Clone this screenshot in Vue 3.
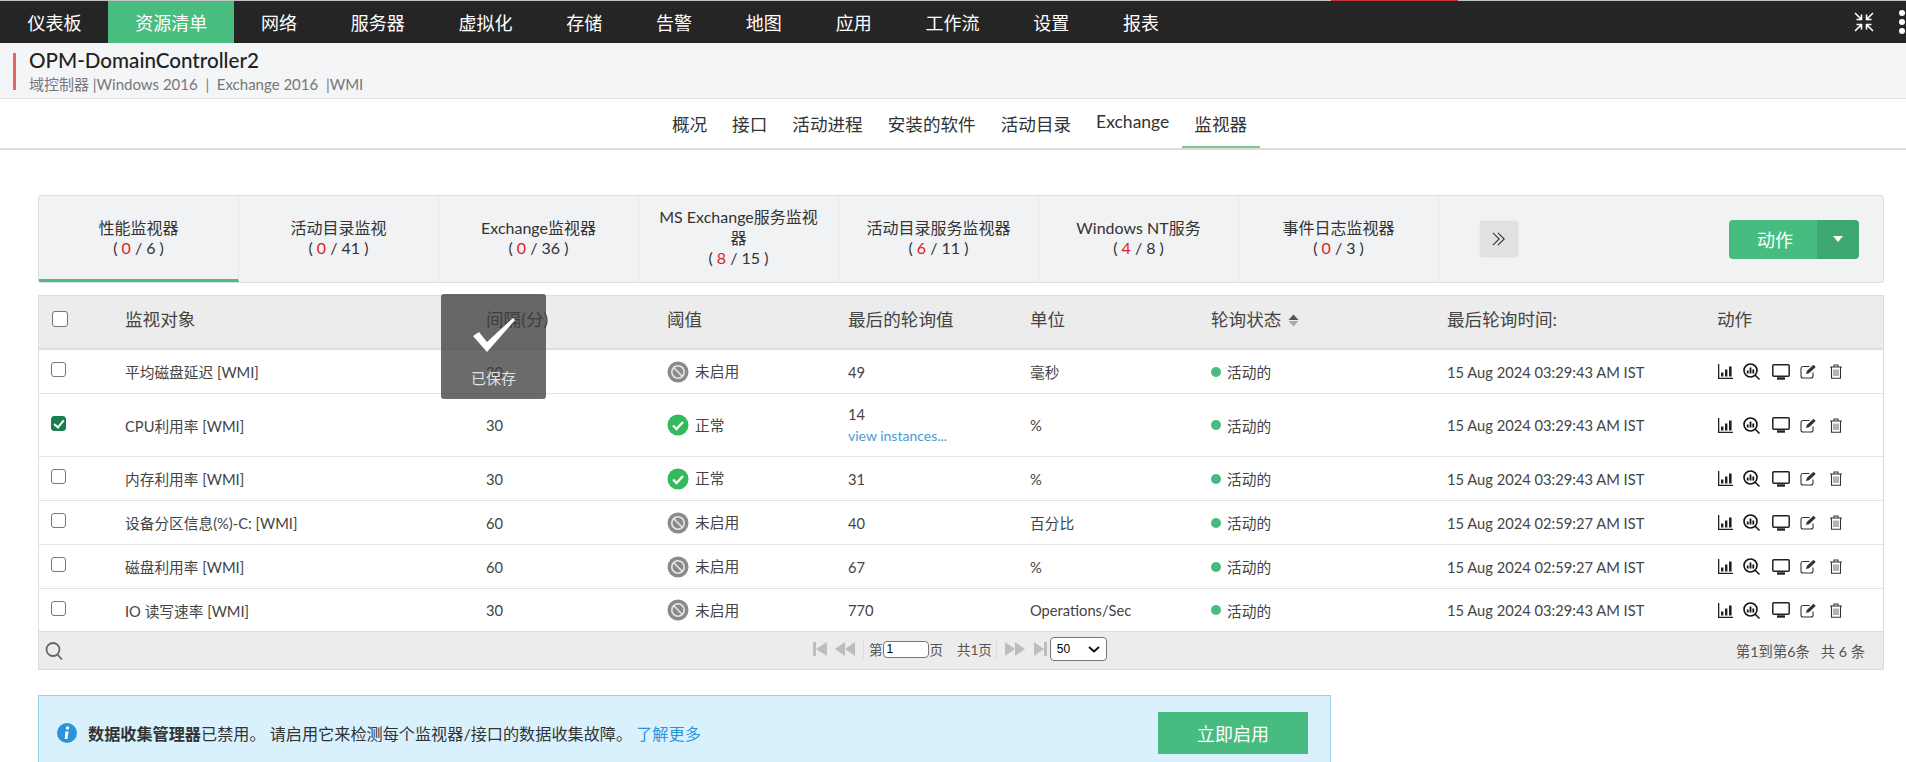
<script setup>
const nav = ['仪表板','资源清单','网络','服务器','虚拟化','存储','告警','地图','应用','工作流','设置','报表']
const subs = ['概况','接口','活动进程','安装的软件','活动目录','Exchange','监视器']
const tabs = [
  { name: '性能监视器', bad: 0, total: 6 },
  { name: '活动目录监视', bad: 0, total: 41 },
  { name: 'Exchange监视器', bad: 0, total: 36 },
  { name: 'MS Exchange服务监视器', bad: 8, total: 15 },
  { name: '活动目录服务监视器', bad: 6, total: 11 },
  { name: 'Windows NT服务', bad: 4, total: 8 },
  { name: '事件日志监视器', bad: 0, total: 3 }
]
const heads = ['监视对象','间隔(分)','阈值','最后的轮询值','单位','轮询状态','最后轮询时间:','动作']
const rows = [
  { name: '平均磁盘延迟 [WMI]', gap: 30, ok: false, val: 49, unit: '毫秒', time: '15 Aug 2024 03:29:43 AM IST' },
  { name: 'CPU利用率 [WMI]', gap: 30, ok: true, val: 14, unit: '%', time: '15 Aug 2024 03:29:43 AM IST', checked: true, more: true },
  { name: '内存利用率 [WMI]', gap: 30, ok: true, val: 31, unit: '%', time: '15 Aug 2024 03:29:43 AM IST' },
  { name: '设备分区信息(%)-C: [WMI]', gap: 60, ok: false, val: 40, unit: '百分比', time: '15 Aug 2024 02:59:27 AM IST' },
  { name: '磁盘利用率 [WMI]', gap: 60, ok: false, val: 67, unit: '%', time: '15 Aug 2024 02:59:27 AM IST' },
  { name: 'IO 读写速率 [WMI]', gap: 30, ok: false, val: 770, unit: 'Operations/Sec', time: '15 Aug 2024 03:29:43 AM IST', last: true }
]
</script>

<template>
  <div class="page">
    <div class="redline"></div>
    <header class="topbar">
      <a v-for="(n, i) in nav" :key="n" class="nav-item" :class="{ on: i === 1 }">{{ n }}</a>
      <div class="top-right">
        <svg class="shrink" width="20" height="20" viewBox="0 0 20 20" fill="none" stroke="#fff" stroke-width="1.6">
          <path d="M1 1l6 6M2.500 7.500h5v-5M19 1l-6 6M17.500 7.500h-5v-5M1 19l6-6M2.500 12.500h5v5M19 19l-6-6M17.500 12.500h-5v5"/>
        </svg>
        <div class="dots"><i></i><i></i><i></i></div>
      </div>
    </header>

    <section class="crumb">
      <div class="crumb-bar"></div>
      <div>
        <div class="crumb-title">OPM-DomainController2</div>
        <div class="crumb-sub">域控制器 |Windows 2016 &nbsp;|&nbsp; Exchange 2016 &nbsp;|WMI</div>
      </div>
    </section>

    <nav class="subnav">
      <a v-for="(s, i) in subs" :key="s" class="sub-item" :class="{ on: i === 6, latin: s === 'Exchange' }">{{ s }}</a>
    </nav>

    <main class="content">
      <div class="tabbar">
        <div v-for="(t, i) in tabs" :key="t.name" class="tab" :class="{ on: i === 0 }">
          <div>{{ t.name }}</div>
          <div class="count">( <span class="red">{{ t.bad }}</span> / {{ t.total }} )</div>
        </div>
        <div class="more-btn">
          <svg width="14" height="14" viewBox="0 0 14 14" fill="none" stroke="#333" stroke-width="1.100"><path d="M1 .8l6.200 6.200-6.200 6.200M6 .8l6.200 6.200-6.200 6.200"/></svg>
        </div>
        <div class="action-btn">
          <span class="action-main">动作</span>
          <span class="action-caret"><i></i></span>
        </div>
      </div>

      <div class="table">
        <div class="toast">
          <svg width="42" height="34" viewBox="0 0 42 34"><path d="M0 18l6-4 8 10L40 0l2 2-28 32z" fill="#fff"/></svg>
          <div class="toast-text">已保存</div>
        </div>
        <div class="row head">
          <div class="c-check"><input type="checkbox" class="chk head-chk" /></div>
          <div v-for="(h, i) in heads" :key="h" class="cell">
            {{ h }}
            <svg v-if="i === 5" class="sort" width="11" height="13" viewBox="0 0 11 13"><path d="M5.500 .5l5 5.500H.5z" fill="#555"/><path d="M5.500 12.500L.5 7h10z" fill="#aaa"/></svg>
          </div>
        </div>
        <div v-for="r in rows" :key="r.name" class="row body" :class="{ tall: r.more, short: r.last }">
          <div class="c-check"><input type="checkbox" class="chk" :checked="r.checked" /></div>
          <div class="cell">{{ r.name }}</div>
          <div class="cell">{{ r.gap }}</div>
          <div class="cell th">
            <svg v-if="r.ok" width="22" height="22" viewBox="0 0 22 22"><circle cx="11" cy="11" r="10.500" fill="#34b95c"/><path d="M6 11.500l3.500 3.500 6.500-7" fill="none" stroke="#fff" stroke-width="2.400"/></svg>
            <svg v-else width="22" height="22" viewBox="0 0 22 22"><circle cx="11" cy="11" r="10.500" fill="#8a8a8a"/><circle cx="11" cy="11" r="6.200" fill="none" stroke="#e8e8e8" stroke-width="1.600"/><path d="M6.800 6.800l8.400 8.400" stroke="#e8e8e8" stroke-width="1.600"/></svg>
            <span class="th-text">{{ r.ok ? '正常' : '未启用' }}</span>
          </div>
          <div class="cell val">
            <div>{{ r.val }}</div>
            <a v-if="r.more" class="link">view instances...</a>
          </div>
          <div class="cell">{{ r.unit }}</div>
          <div class="cell st"><i class="dot"></i>活动的</div>
          <div class="cell">{{ r.time }}</div>
          <div class="cell icons">
            <svg width="15" height="15" viewBox="0 0 15 15" fill="#222"><path d="M0 0h1.300v13.700H15V15H0z"/><path d="M3 8.500h2.400v4H3zM7 5.500h2.400v7H7zM11 2.500h2.600v10H11z"/></svg>
            <svg width="17" height="17" viewBox="0 0 17 17" fill="none" stroke="#111"><circle cx="7.500" cy="7.500" r="6.500" stroke-width="1.600"/><path d="M12 12l4.500 4.500" stroke-width="1.500"/><path d="M4.700 7.500v3M7.500 4.500v6M10.300 6.500v4" stroke-width="1.800"/></svg>
            <svg width="18" height="16" viewBox="0 0 18 16" fill="none" stroke="#222"><rect x=".8" y=".8" width="16.400" height="11.400" rx="1" stroke-width="1.500"/><path d="M5 14.500h8" stroke-width="2.400"/></svg>
            <svg width="17" height="15" viewBox="0 0 17 15" fill="none" stroke="#333"><path d="M13 8.500V12a2 2 0 0 1-2 2H3a2 2 0 0 1-2-2V4.500a2 2 0 0 1 2-2h6.500" stroke-width="1.100"/><path d="M6 10l.8-3L13.500.8l2.200 2.200L9 9.200z" fill="#333" stroke="none"/></svg>
            <svg width="14" height="15" viewBox="0 0 14 15" fill="none" stroke="#333"><path d="M1 3h12M5 3V1h4v2M2.500 3v11.300h9V3" stroke-width="1.100"/><path d="M5 5.500v6.500M7 5.500v6.500M9 5.500v6.500" stroke="#666" stroke-width="1"/></svg>
          </div>
        </div>

        <div class="tfoot">
          <svg class="search" width="19" height="18" viewBox="0 0 19 18" fill="none" stroke="#666" stroke-width="1.800"><circle cx="8" cy="7.500" r="6.500"/><path d="M12.500 12.500l4.500 5"/></svg>
          <div class="pager">
            <svg width="14" height="14" viewBox="0 0 14 14" fill="#bdbdbd"><path d="M0 0h3v14H0zM14 0v14L3 7z"/></svg>
            <svg class="g8" width="20" height="14" viewBox="0 0 20 14" fill="#bdbdbd"><path d="M10 0v14L0 7zM20 0v14L10 7z"/></svg>
            <i class="sep"></i>
            <span class="pt1">第</span>
            <input class="page-input" value="1" />
            <span>页</span>
            <span class="pt2">共1页</span>
            <i class="sep sep2"></i>
            <svg width="20" height="14" viewBox="0 0 20 14" fill="#bdbdbd"><path d="M0 0v14l10-7zM10 0v14l10-7z"/></svg>
            <svg class="g9" width="13" height="14" viewBox="0 0 13 14" fill="#bdbdbd"><path d="M0 0v14l10-7zM10 0h3v14h-3z"/></svg>
            <select class="page-size"><option>50</option></select>
          </div>
          <div class="foot-right">第1到第6条 &nbsp; 共 6 条</div>
        </div>
      </div>

      <div class="notice">
        <svg width="20" height="20" viewBox="0 0 20 20"><circle cx="10" cy="10" r="10" fill="#2b95dc"/><circle cx="10.500" cy="5" r="1.700" fill="#fff"/><path d="M8.300 8.500h3.200l-1 7.500H7.800z" fill="#fff"/></svg>
        <div class="notice-text"><b>数据收集管理器</b>已禁用。 请启用它来检测每个监视器/接口的数据收集故障。 <a class="learn">了解更多</a></div>
        <button class="enable">立即启用</button>
      </div>
    </main>
  </div>
</template>

<style>
html, body { margin: 0; overflow: hidden; background: #fff; }
</style>

<style scoped>
.page {
  position: relative;
  height: 762px;
  overflow: hidden;
  font-family: "Lato", "Noto Sans CJK SC", sans-serif;
  color: #333;
  font-size: 15px;
  font-weight: 400;
}
.redline {
  position: absolute; left: 1331px; top: 0; width: 127px; height: 1px; background: #c0353a; z-index: 2;
}
.topbar {
  display: flex; height: 42px; padding-left: .5px; border-top: 1px solid #c4c4c4; background: #252525; align-items: stretch;
}
.nav-item {
  display: flex; align-items: center; padding: 0 26.900px; color: #fff; font-size: 18px;
}
.nav-item.on { background: #49bc80; }
.top-right { margin-left: auto; display: flex; align-items: center; gap: 25px; }
.dots { display: flex; flex-direction: column; gap: 3px; width: 7px; }
.dots i { display: block; width: 6px; height: 6px; border-radius: 50%; background: #fff; }
.crumb {
  display: flex; gap: 13px; height: 56px; padding: 6px 0 0 13px; box-sizing: border-box; background: #f4f5f7;
  border-bottom: 1px solid #dcdee0;
}
.crumb-bar { width: 3px; height: 37px; margin-top: 4px; background: #e46565; }
.crumb-title { font-size: 20.600px; line-height: 22px; color: #222; font-weight: 500; }
.crumb-sub { font-size: 15px; line-height: 20px; margin-top: 3px; color: #777; }
.subnav {
  display: flex; justify-content: center; height: 49px; box-sizing: border-box; margin-left: 13px;
  align-items: stretch;
}
.sub-item { display: flex; align-items: center; padding: 2px 12.500px 0; font-size: 17.600px; color: #333; border-bottom: 2px solid transparent; }
.sub-item.latin { font-size: 17.500px; padding-top: 0; padding-bottom: 3px; }
.sub-item.on { border-bottom-color: #7cc98f; }
.content { border-top: 2px solid #ddd; padding: 0 22px 0 38px; height: 700px; position: relative; }
.tabbar {
  display: flex; align-items: stretch; margin-top: 45px; height: 88px; box-sizing: border-box;
  background: #f1f2f4; border: 1px solid #dfdfdf; border-radius: 3px;
}
.tab {
  width: 200px; box-sizing: border-box; padding: 0 18px; display: flex; flex-direction: column; justify-content: center;
  text-align: center; font-size: 16px; line-height: 20.500px; color: #333; border-right: 1px solid #e7e7e9;
  border-bottom: 3px solid transparent; border-top: 1px solid transparent;
}
.tab.on { border-bottom-color: #4dbb80; }
.red { color: #e01b1b; }
.more-btn {
  align-self: center; width: 38px; height: 36px; margin-left: 41px; background: #e2e1e1; display: flex; align-items: center; justify-content: center; border-radius: 2px; box-shadow: 0 0 2px rgba(0,0,0,.08);
}
.action-btn {
  align-self: center; margin-left: auto; margin-right: 24px; width: 130px; height: 39px; display: flex; border-radius: 4px; overflow: hidden; color: #fff; font-size: 18px;
}
.action-main { flex: 1; padding-left: 4px; background: #47bc80; display: flex; align-items: center; justify-content: center; }
.action-caret { width: 42px; background: #3ea872; display: flex; align-items: center; justify-content: center; }
.action-caret i { border: 5px solid transparent; border-top: 6px solid #fff; border-bottom: 0; width: 0; height: 0; }
.table { position: relative; margin-top: 12px; border: 1px solid #dcdcdc; }
.row {
  display: grid;
  grid-template-columns: 86px 361px 181px 181px 182px 181px 236px 270px 1fr;
  align-items: center;
  border-bottom: 1px solid #e4e4e4;
  box-sizing: border-box;
}
.head { height: 54px; padding-bottom: 7px; background: #ececec; font-size: 17.600px; color: #444; border-bottom: 2px solid #dedede; }
.body { height: 44px; font-size: 14.700px; color: #444; }
.body.tall { height: 63px; }
.body.short { height: 42px; border-bottom: 0; }
.c-check { padding-left: 12px; display: flex; align-items: center; }
.chk {
  appearance: none; width: 15px; height: 15px; margin: 0 0 4px; border: 1px solid #777; border-radius: 3px; background: #fff; position: relative; display: block;
}
.head-chk { width: 16px; height: 16px; margin: 0 0 0 1px; }
.chk:checked { background: #1c7d4f; border-color: #1c7d4f; }
.chk:checked::after {
  content: ""; position: absolute; left: 4px; top: 1px; width: 4px; height: 8px; border: solid #fff; border-width: 0 2px 2px 0; transform: rotate(40deg);
}
.th { display: flex; align-items: center; gap: 6px; }
.th-text { margin-bottom: 2px; }
.val { line-height: 22px; }
.link { color: #4a9bd1; display: block; font-size: 14px; }
.st { display: flex; align-items: center; gap: 6px; }
.dot { width: 10px; height: 10px; border-radius: 50%; background: #4abb80; }
.sort { vertical-align: -1px; margin-left: 2px; }
.icons { display: flex; align-items: center; }
.icons svg:nth-child(1) { margin-left: 1px; }
.icons svg:nth-child(2) { margin-left: 10px; }
.icons svg:nth-child(3) { margin-left: 12px; }
.icons svg:nth-child(4) { margin-left: 10px; }
.icons svg:nth-child(5) { margin-left: 12px; }
.toast {
  position: absolute; left: 402px; top: -2px; width: 105px; height: 105px; background: rgba(60,60,60,.76); border-radius: 3px; z-index: 3;
  display: flex; flex-direction: column; align-items: center; box-sizing: border-box; padding-top: 24px; color: #e2e2e2; font-size: 15px;
}
.toast-text { margin-top: 15px; }
.tfoot {
  display: flex; align-items: center; position: relative; height: 38px; background: #ececec; border-top: 1px solid #dcdcdc; box-sizing: border-box; font-size: 13.500px; color: #555;
}
.search { margin-left: 6px; }
.pager { position: absolute; left: 774px; top: 5px; display: flex; align-items: center; height: 24px; }
.g8 { margin-left: 8px; }
.sep { width: 1px; height: 20px; background: #dcdcdc; margin-left: 8px; }
.sep2 { margin-left: 4px; margin-right: 8px; }
.pt1 { margin-left: 5px; }
.pt2 { margin-left: 14px; }
.g9 { margin-left: 9px; }
.page-input {
  width: 46px; height: 17px; box-sizing: border-box; margin: 0 1px 0 0; padding: 0 3px; border: 1px solid #767676; border-radius: 4px; font: 12px "Liberation Sans", sans-serif; color: #000; background: #fff;
}
.page-size {
  appearance: none; margin-left: 3px; width: 57px; height: 24px; box-sizing: border-box; padding: 0 0 0 6px; font: 12px "Liberation Sans", sans-serif; color: #000; border: 1px solid #767676; border-radius: 4px;
  background: #fff url("data:image/svg+xml,%3Csvg xmlns='http://www.w3.org/2000/svg' width='12' height='7'%3E%3Cpath d='M1 1l5 4.500 5-4.500' fill='none' stroke='%23111' stroke-width='2'/%3E%3C/svg%3E") no-repeat right 6px center;
}
.foot-right { margin-left: auto; margin-right: 18px; font-size: 14.300px; color: #555; }
.notice {
  margin-top: 25px; width: 1293px; height: 76px; box-sizing: border-box; background: #d9f1fd; border: 1px solid #9dd3e8; display: flex; align-items: center; padding-left: 18px;
}
.notice-text { margin-left: 11px; font-size: 16.150px; color: #333; }
.notice-text b { font-weight: 700; }
.learn { color: #2b95dc; }
.enable {
  margin-left: auto; margin-right: 22px; width: 150px; height: 42px; border: 0; background: #48bc80; color: #fff; font: 18px "Lato", "Noto Sans CJK SC", sans-serif;
}
</style>
